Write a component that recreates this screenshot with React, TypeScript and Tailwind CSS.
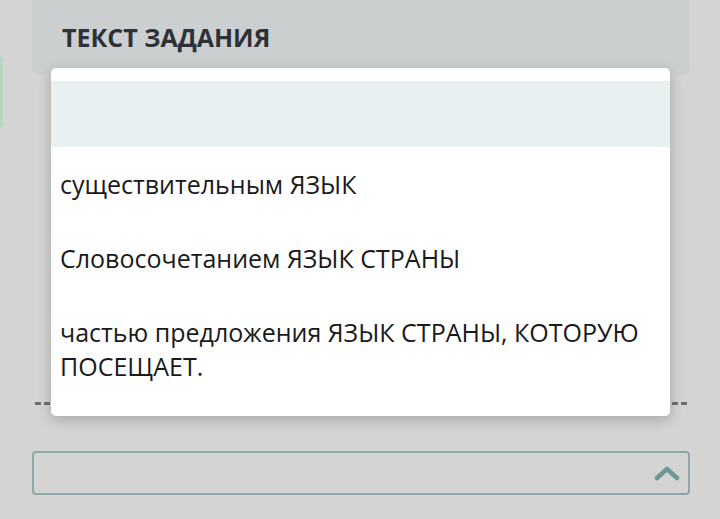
import React from "react";

const options = [
  "",
  "существительным ЯЗЫК",
  "Словосочетанием ЯЗЫК СТРАНЫ",
  "частью предложения ЯЗЫК СТРАНЫ, КОТОРУЮ ПОСЕЩАЕТ.",
];

const App: React.FC = () => {
  return (
    <div
      className="relative w-[720px] h-[519px] overflow-hidden bg-[#d4d4d2]"
      style={{ fontFamily: '"Open Sans", "Noto Sans", sans-serif' }}
    >
      <div className="flex">
        {/* cut-off element at the left edge */}
        <div className="mt-[57px] w-[3px] h-[70px] bg-[#b7d6c1]" />
        <div className="ml-[29px] w-[658px] flex flex-col">
          <div className="h-[75px] rounded-b-[8px] bg-[#cbcfcf] pl-[30px] pt-[20px]">
            <span className="text-[25px] leading-[34px] font-bold text-[#2e3237]">
              ТЕКСТ ЗАДАНИЯ
            </span>
          </div>
          <div className="mt-[327px] mx-[3px] border-t-[3px] border-dashed border-[#6b6f72]" />
          <div className="mt-[46px] h-[44px] rounded-[4px] border-2 border-[#8ea8a8] flex items-center justify-end pr-[8px]">
            <svg width="26" height="18" viewBox="0 0 26 18" fill="none">
              <path d="M3 14 L13 5 L23 14" stroke="#6e9797" strokeWidth="4.5" strokeLinecap="round" strokeLinejoin="round" />
            </svg>
          </div>
        </div>
      </div>

      {/* open dropdown list */}
      <div className="absolute left-[51px] top-[68px] w-[619px] h-[348px] rounded-[5px] bg-white shadow-[0_4px_14px_rgba(0,0,0,0.22)] py-[13px]">
        {options.map((opt, idx) =>
          idx === 0 ? (
            <div key={idx} className="h-[66px] bg-[#e8f0f2]" />
          ) : (
            <div
              key={idx}
              className="px-[9px] py-[20px] text-[25px] leading-[34px] text-[#1a1a1a]"
            >
              {opt}
            </div>
          )
        )}
      </div>
    </div>
  );
};

export default App;
